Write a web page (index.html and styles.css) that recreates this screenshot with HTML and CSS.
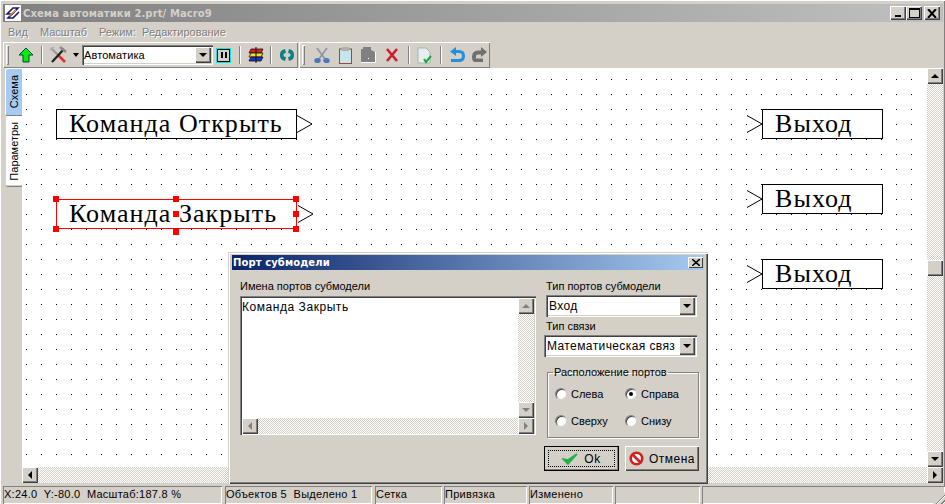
FILE: index.html
```html
<!DOCTYPE html>
<html lang="ru">
<head>
  <meta charset="UTF-8" />
  <title>Схема автоматики</title>
  <link rel="stylesheet" href="styles.css">
</head>
<body>
  <div class="window">
    <div class="titlebar">
      <svg class="logo" width="16" height="16" viewBox="0 0 16 16">
        <rect width="16" height="16" fill="#fff"/>
        <path d="M2 9 L8 3 H13 L7 9 Z" fill="none" stroke="#14147a" stroke-width="1.6"/>
        <path d="M14 7 L8 13 H3 L9 7" fill="none" stroke="#14147a" stroke-width="1.6"/>
        <path d="M4 11 L11 5" stroke="#e8902a" stroke-width="1.6"/>
      </svg>
      <span class="title-text">Схема автоматики 2.prt/ Macro9</span>
      <div class="caption-btns">
        <button class="caption-btn"><span class="cap-min"></span></button>
        <button class="caption-btn"><span class="cap-max"></span></button>
        <button class="caption-btn cap-close">
          <svg width="10" height="9" viewBox="0 0 10 9"><path d="M1 0 L9 9 M9 0 L1 9" stroke="#000" stroke-width="2"/></svg>
        </button>
      </div>
    </div>

    <div class="menu">
      <span>Вид</span>
      <span>Масштаб</span>
      <span>Режим:&nbsp;&nbsp;Редактирование</span>
    </div>

    <div class="toolbars">
      <div class="toolbar bar-one">
        <i class="grip"></i>
        <svg class="ico ico-up" width="16" height="16" viewBox="0 0 16 16"><path d="M8 1 L15 8 H11 V15 H5 V8 H1 Z" fill="#00f000" stroke="#044" stroke-width="1"/></svg>
        <i class="sep"></i>
        <svg class="ico ico-tools" width="18" height="18" viewBox="0 0 18 18">
          <path d="M2 2 L9 9" stroke="#9a9a9a" stroke-width="2.2"/>
          <path d="M9 9 L16 16" stroke="#e03030" stroke-width="2.6"/>
          <path d="M15 3 L3 16" stroke="#222" stroke-width="2.2"/>
          <path d="M11 1 L17 6" stroke="#8a8a8a" stroke-width="2.6"/>
          <path d="M1 4 L5 1" stroke="#b0b0b0" stroke-width="1.6"/>
        </svg>
        <i class="drop-caret"></i>
        <div class="combo tool-combo">
          <span class="combo-val">Автоматика</span>
          <span class="sb-btn"><i class="tri tri-down"></i></span>
        </div>
        <span class="pause-btn"><i></i><i></i></span>
        <i class="sep sep-a"></i>
        <svg class="ico ico-stack" width="16" height="16" viewBox="0 0 16 16">
          <path d="M3 2 H15 L13 6 H1 Z" fill="#e02020" stroke="#111" stroke-width=".8"/>
          <path d="M3 6 H15 L13 10 H1 Z" fill="#f0e020" stroke="#111" stroke-width=".8"/>
          <path d="M3 10 H15 L13 14 H1 Z" fill="#2030d0" stroke="#111" stroke-width=".8"/>
          <path d="M8 0 V16" stroke="#111"/>
        </svg>
        <i class="sep sep-b"></i>
        <svg class="ico ico-cycle" width="16" height="14" viewBox="0 0 16 14">
          <path d="M6 1 C2 2 1 4 1 7 C1 10 2 12 6 13 L7 9 C5 9 4.500 8 4.500 7 C4.500 6 5 5 7 5 Z" fill="#0f7f86"/>
          <path d="M10 1 C14 2 15 4 15 7 C15 10 14 12 10 13 L9 9 C11 9 11.500 8 11.500 7 C11.500 6 11 5 9 5 Z" fill="#0f7f86"/>
        </svg>
      </div>
      <div class="toolbar bar-two">
        <i class="grip"></i>
        <svg class="ico ico-cut" width="16" height="17" viewBox="0 0 16 17">
          <path d="M3 1 L11 12 M13 1 L5 12" stroke="#8a94a4" stroke-width="1.6"/>
          <ellipse cx="3.500" cy="13.500" rx="3.200" ry="2.600" fill="#4a78bc"/>
          <ellipse cx="12.500" cy="13.500" rx="3.200" ry="2.600" fill="#4a78bc"/>
        </svg>
        <svg class="ico ico-clip" width="13" height="17" viewBox="0 0 13 17">
          <rect x=".5" y="2" width="12" height="14.5" fill="#c8e4ec" stroke="#9a4a30"/>
          <rect x="3" y="0" width="7" height="4" fill="#b0b0b0"/>
        </svg>
        <svg class="ico ico-paste" width="16" height="16" viewBox="0 0 16 16">
          <path d="M1 15 V2 H3 V0 H11 V3 L15 5 V15 Z" fill="#808080"/>
          <path d="M1 15.500 H15.500 V5" fill="none" stroke="#fff"/>
          <rect x="8" y="11" width="1" height="1" fill="#fff"/>
        </svg>
        <svg class="ico ico-del" width="14" height="14" viewBox="0 0 14 14"><path d="M2 1 L12 13 M12 1 L2 13" stroke="#c8202c" stroke-width="2.6"/></svg>
        <i class="sep sep-c"></i>
        <svg class="ico ico-doc" width="15" height="17" viewBox="0 0 15 17">
          <path d="M1 1 H9 L13 5 V16 H1 Z" fill="#e6eeee" stroke="#a8b4b4"/>
          <path d="M7 12 L9 15 L14 9" fill="none" stroke="#1aa83c" stroke-width="2"/>
        </svg>
        <i class="sep sep-d"></i>
        <svg class="ico ico-undo" width="16" height="16" viewBox="0 0 16 16">
          <path d="M7 0 V9 L1 4.500 Z" fill="#2090e0"/>
          <path d="M5 4.500 H10 Q14.500 4.500 14.500 9 T10 13.500 H2" fill="none" stroke="#2090e0" stroke-width="3"/>
        </svg>
        <svg class="ico ico-redo" width="17" height="16" viewBox="0 0 17 16">
          <path d="M10 0 L16 5 L10 10 V7.500 H7 Q5 7.500 5 9.500 V11.500 H12 V15 H4 Q1 15 1 10 Q1 3.500 7 3.500 H10 Z" fill="#707070"/>
        </svg>
      </div>
    </div>

    <div class="main">
      <div class="side-tabs">
        <div class="side-tab tab-active"><span>Схема</span></div>
        <div class="side-tab tab-params"><span>Параметры</span></div>
      </div>
      <div class="work">
        <div class="work-row">
          <div class="canvas">
            <svg class="dots" width="905" height="399">
              <defs>
                <pattern id="grid" x="4" y="11" width="15" height="15" patternUnits="userSpaceOnUse">
                  <rect width="1" height="1" fill="#000"/>
                </pattern>
              </defs>
              <rect width="896" height="390" fill="url(#grid)"/>
            </svg>

            <div class="block b-open">Команда Открыть</div>
            <svg class="port p-open" width="16" height="18" viewBox="0 0 16 18"><path d="M0 .5 L15 9 L0 17.5" fill="#fff" stroke="#000"/></svg>

            <div class="block b-close">Команда Закрыть</div>
            <svg class="port p-close" width="16" height="18" viewBox="0 0 16 18"><path d="M0 .5 L15 9 L0 17.5" fill="#fff" stroke="#000"/></svg>
            <i class="h h1"></i><i class="h h2"></i><i class="h h3"></i>
            <i class="h h4"></i><i class="h h5"></i>
            <i class="h h6"></i><i class="h h7"></i><i class="h h8"></i>

            <div class="block b-out o1">Выход</div>
            <div class="block b-out o2">Выход</div>
            <div class="block b-out o3">Выход</div>
            <svg class="port q1" width="16" height="18" viewBox="0 0 16 18"><path d="M0 .5 L15 9 L0 17.5" fill="#fff" stroke="#000"/></svg>
            <svg class="port q2" width="16" height="18" viewBox="0 0 16 18"><path d="M0 .5 L15 9 L0 17.5" fill="#fff" stroke="#000"/></svg>
            <svg class="port q3" width="16" height="18" viewBox="0 0 16 18"><path d="M0 .5 L15 9 L0 17.5" fill="#fff" stroke="#000"/></svg>
          </div>
          <div class="vscroll track">
            <span class="sb-btn"><i class="tri tri-up"></i></span>
            <span class="v-thumb"></span>
            <span class="sb-btn"><i class="tri tri-down"></i></span>
          </div>
        </div>
        <div class="hscroll track">
          <span class="sb-btn"><i class="tri tri-left"></i></span>
          <span class="sb-btn"><i class="tri tri-right"></i></span>
        </div>
      </div>
    </div>

    <div class="status">
      <div class="cell c1">X:24.0&nbsp; Y:-80.0&nbsp; Масштаб:187.8 %</div>
      <div class="cell c2">Объектов 5&nbsp; Выделено 1</div>
      <div class="cell c3">Сетка</div>
      <div class="cell c4">Привязка</div>
      <div class="cell c5">Изменено</div>
      <div class="cell c6"></div>
      <div class="cell c8"><i class="size-grip"></i></div>
    </div>
  </div>

  <div class="dialog">
    <div class="dlg-title">
      <span>Порт субмодели</span>
      <button class="dlg-close"><svg width="8" height="7" viewBox="0 0 8 7"><path d="M0 0 L8 7 M8 0 L0 7" stroke="#000" stroke-width="1.6"/></svg></button>
    </div>
    <div class="dlg-body">
      <div class="dlg-left">
        <div class="lbl">Имена портов субмодели</div>
        <div class="listbox">
          <div class="list-row">
            <div class="list-text">Команда Закрыть</div>
            <div class="list-v track">
              <span class="sb-btn off"><i class="tri tri-up"></i></span>
              <span class="sb-btn off"><i class="tri tri-down"></i></span>
            </div>
          </div>
          <div class="list-h track">
            <span class="sb-btn off"><i class="tri tri-left"></i></span>
            <span class="sb-btn off"><i class="tri tri-right"></i></span>
          </div>
        </div>
      </div>
      <div class="dlg-right">
        <div class="lbl">Тип портов субмодели</div>
        <div class="combo combo-type">
          <span class="combo-val">Вход</span>
          <span class="sb-btn"><i class="tri tri-down"></i></span>
        </div>
        <div class="lbl lbl-link">Тип связи</div>
        <div class="combo combo-link">
          <span class="combo-val">Математическая связ</span>
          <span class="sb-btn"><i class="tri tri-down"></i></span>
        </div>
        <fieldset class="group">
          <legend>Расположение портов</legend>
          <div class="radios">
            <label class="radio"><i></i>Слева</label>
            <label class="radio on"><i></i>Справа</label>
            <label class="radio"><i></i>Сверху</label>
            <label class="radio"><i></i>Снизу</label>
          </div>
        </fieldset>
      </div>
    </div>
    <div class="dlg-buttons">
      <button class="btn btn-ok">
        <span class="focus">
          <svg width="16" height="13" viewBox="0 0 16 13"><path d="M1 7 L6 12 L15 2 L6 8 Z" fill="#22b04c" stroke="#22b04c" stroke-width="1.6"/></svg>
          Ok
        </span>
      </button>
      <button class="btn btn-cancel">
        <svg width="15" height="15" viewBox="0 0 15 15"><circle cx="7.500" cy="7.500" r="5.800" fill="#fff" stroke="#d02020" stroke-width="2.600"/><path d="M3.500 3.500 L11.500 11.500" stroke="#d02020" stroke-width="2.600"/></svg>
        Отмена
      </button>
    </div>
  </div>
</body>
</html>
```

FILE: styles.css
```css
html, body {
  margin: 0;
  height: 504px;
  overflow: hidden;
}
body {
  position: relative;
  width: 945px;
  background: #d4d0c8;
  font-family: "Liberation Sans", sans-serif;
  font-size: 11px;
  color: #000;
}
button {
  font: inherit;
  padding: 0;
  color: inherit;
}
i {
  display: block;
}

.window {
  display: flex;
  flex-direction: column;
  height: 504px;
  padding: 1px 2px 0 3px;
  box-sizing: border-box;
  box-shadow: inset 1px 1px 0 #fff, inset -1px 0 0 #808080, inset -2px 0 0 #d4d0c8;
}

/* title */
.titlebar {
  height: 18px;
  margin-top: 3px;
  display: flex;
  align-items: center;
  background: linear-gradient(to right, #808080, #c0c0c0);
  flex: none;
}
.logo {
  margin: 0 2px 0 2px;
  flex: none;
}
.title-text {
  font-weight: bold;
  color: #d4d0c8;
  font-family: "DejaVu Sans", sans-serif;
  font-size: 10px;
  letter-spacing: .1px;
  white-space: nowrap;
}
.caption-btns {
  margin-left: auto;
  display: flex;
  margin-right: 3px;
}
.caption-btn {
  width: 16px;
  height: 14px;
  background: #d4d0c8;
  border: none;
  box-shadow: inset 1px 1px 0 #fff, inset -1px -1px 0 #404040, inset -2px -2px 0 #808080;
  display: flex;
  align-items: center;
  justify-content: center;
  position: relative;
}
.cap-close {
  margin-left: 2px;
}
.cap-min {
  width: 6px;
  height: 2px;
  background: #000;
  margin-top: 6px;
}
.cap-max {
  width: 9px;
  height: 7px;
  border: 1px solid #000;
  border-top-width: 2px;
}

/* menu */
.menu {
  height: 20px;
  display: flex;
  align-items: center;
  gap: 12px;
  padding-left: 5px;
  flex: none;
  color: #808080;
  text-shadow: 1px 1px 0 #fff;
  font-size: 11px;
}

/* toolbars */
.toolbars {
  height: 26px;
  display: flex;
  flex: none;
  gap: 1px;
}
.toolbar {
  display: flex;
  align-items: center;
  box-sizing: border-box;
  height: 26px;
  box-shadow: inset 1px 1px 0 #fff, inset -1px -1px 0 #808080;
}
.bar-one {
  width: 295px;
}
.bar-two {
  width: 191px;
}
.grip {
  width: 3px;
  height: 20px;
  margin-left: 3px;
  box-shadow: inset 1px 1px 0 #fff, inset -1px -1px 0 #808080;
  flex: none;
}
.sep {
  width: 2px;
  height: 18px;
  box-shadow: inset 1px 0 0 #808080, inset -1px 0 0 #fff;
  flex: none;
}
.ico {
  flex: none;
}
.ico-up { margin-left: 9px; margin-right: 7px; }
.ico-tools { margin-left: 6px; }
.drop-caret {
  width: 0;
  height: 0;
  border: 3.5px solid transparent;
  border-top: 4px solid #000;
  border-bottom: 0;
  margin-left: 6px;
}
.tool-combo {
  width: 131px;
  height: 20px;
  margin-left: 3px;
}
.pause-btn {
  width: 15px;
  height: 15px;
  box-sizing: border-box;
  margin-left: 3px;
  border: 1px solid #00e8e8;
  background: #d4d0c8;
  outline: 1px solid #000;
  outline-offset: -2px;
  display: flex;
  align-items: center;
  justify-content: center;
  gap: 2px;
}
.pause-btn i {
  width: 2px;
  height: 6px;
  background: #000;
}
.sep-a { margin-left: 8px; }
.ico-stack { margin-left: 7px; }
.sep-b { margin-left: 6px; }
.ico-cycle { margin-left: 7px; }

.ico-cut { margin-left: 9px; }
.ico-clip { margin-left: 9px; }
.ico-paste { margin-left: 8px; }
.ico-del { margin-left: 9px; }
.sep-c { margin-left: 9px; }
.ico-doc { margin-left: 7px; }
.sep-d { margin-left: 8px; }
.ico-undo { margin-left: 7px; }
.ico-redo { margin-left: 6px; }

/* main area */
.main {
  flex: 1;
  display: flex;
  min-height: 0;
}
.side-tabs {
  width: 19px;
  flex: none;
  display: flex;
  flex-direction: column;
}
.side-tab {
  margin-left: 2px;
  width: 17px;
  box-sizing: border-box;
  display: flex;
  align-items: center;
  justify-content: center;
  border-radius: 2px 0 0 2px;
  box-shadow: inset 1px 1px 0 #fff, inset 0 -1px 0 #808080;
}
.side-tab span {
  writing-mode: vertical-rl;
  transform: rotate(180deg);
  font-size: 11px;
  white-space: nowrap;
}
.tab-active {
  height: 48px;
  background: #a6caf0;
}
.tab-params {
  height: 71px;
  background: #fff;
  box-shadow: inset 1px 0 0 #d4d0c8, inset 0 -1px 0 #808080, inset 0 -2px 0 #d4d0c8;
}

.work {
  width: 921px;
  display: flex;
  flex-direction: column;
}
.work-row {
  display: flex;
  height: 399px;
}
.canvas {
  position: relative;
  width: 905px;
  height: 399px;
  background: #fff;
  overflow: hidden;
}
.dots {
  position: absolute;
  left: 0;
  top: 0;
  shape-rendering: crispEdges;
}

/* diagram nodes */
.block {
  position: absolute;
  box-sizing: border-box;
  height: 30px;
  border: 1px solid #000;
  background: #fff;
  font-family: "Liberation Serif", serif;
  font-size: 26px;
  line-height: 28px;
  letter-spacing: 1.050px;
  padding-left: 12px;
  white-space: nowrap;
}
.b-open { left: 34px; top: 41px; width: 241px; }
.b-close { left: 34px; top: 131px; width: 241px; border-color: #f00; }
.b-out { left: 740px; width: 121px; }
.o1 { top: 41px; }
.o2 { top: 116px; }
.o3 { top: 191px; }
.port { position: absolute; }
.p-open { left: 275px; top: 47px; }
.p-close { left: 276px; top: 137px; }
.q1 { left: 725px; top: 47px; }
.q2 { left: 725px; top: 122px; }
.q3 { left: 725px; top: 197px; }
.h {
  position: absolute;
  width: 6px;
  height: 6px;
  background: #f00;
}
.h1 { left: 31px; top: 128px; }
.h2 { left: 151px; top: 128px; }
.h3 { left: 271px; top: 128px; }
.h4 { left: 151px; top: 143px; }
.h5 { left: 271px; top: 143px; }
.h6 { left: 31px; top: 158px; }
.h7 { left: 151px; top: 161px; }
.h8 { left: 271px; top: 158px; }

/* scrollbars */
.track {
  background: repeating-conic-gradient(#fff 0 25%, #d4d0c8 0 50%) 0 0 / 2px 2px;
  display: flex;
  justify-content: space-between;
  flex: none;
}
.sb-btn {
  width: 16px;
  height: 16px;
  flex: none;
  box-sizing: border-box;
  background: #d4d0c8;
  box-shadow: inset 1px 1px 0 #fff, inset -1px -1px 0 #404040, inset -2px -2px 0 #808080;
  display: flex;
  align-items: center;
  justify-content: center;
}
.tri {
  width: 0;
  height: 0;
  border: 4px solid transparent;
}
.tri-up { border-top: 0; border-bottom-color: #000; }
.tri-down { border-bottom: 0; border-top-color: #000; }
.tri-left { border-left: 0; border-right-color: #000; }
.tri-right { border-right: 0; border-left-color: #000; }
.off .tri-up { border-bottom-color: #808080; }
.off .tri-down { border-top-color: #808080; }
.off .tri-left { border-right-color: #808080; }
.off .tri-right { border-left-color: #808080; }

.vscroll {
  width: 16px;
  height: 399px;
  flex-direction: column;
}
.v-thumb {
  width: 16px;
  height: 16px;
  background: #d4d0c8;
  box-shadow: inset 1px 1px 0 #fff, inset -1px -1px 0 #404040, inset -2px -2px 0 #808080;
}
.hscroll {
  width: 921px;
  height: 16px;
}

/* status bar */
.status {
  height: 20px;
  flex: none;
  display: flex;
  margin: 0 -2px 0 0;
  padding-top: 2px;
  box-sizing: border-box;
}
.cell {
  box-sizing: border-box;
  height: 18px;
  line-height: 17px;
  padding-left: 1px;
  white-space: nowrap;
  overflow: hidden;
  box-shadow: inset 1px 1px 0 #808080, inset -1px -1px 0 #fff;
  font-size: 11px;
  letter-spacing: .25px;
  flex: none;
  position: relative;
}
.c1 { width: 219px; margin-right: 3px; }
.c2 { width: 147px; margin-right: 3px; }
.c3 { width: 67px; margin-right: 2px; }
.c4 { width: 83px; margin-right: 2px; }
.c5 { width: 84px; margin-right: 2px; }
.c6 { width: 85px; margin-right: 2px; }
.c8 { flex: 1; }
.size-grip {
  position: absolute;
  right: 0;
  bottom: 0;
  width: 12px;
  height: 12px;
  background: repeating-linear-gradient(135deg, #d4d0c8 0 2px, #808080 2px 3px, #fff 3px 4px);
  clip-path: polygon(100% 0, 100% 100%, 0 100%);
}

/* dialog */
.dialog {
  position: absolute;
  left: 228px;
  top: 252px;
  width: 480px;
  height: 232px;
  box-sizing: border-box;
  background: #d4d0c8;
  padding: 3px 4px;
  box-shadow: inset 1px 1px 0 #d4d0c8, inset 2px 2px 0 #fff, inset -1px -1px 0 #404040, inset -2px -2px 0 #808080;
  display: flex;
  flex-direction: column;
}
.dlg-title {
  height: 15px;
  flex: none;
  background: linear-gradient(to right, #0a246a, #a6caf0);
  color: #fff;
  font-weight: bold;
  display: flex;
  align-items: center;
  justify-content: space-between;
  padding: 0 0 0 1px;
  font-family: "DejaVu Sans", sans-serif;
  font-size: 10px;
  letter-spacing: .1px;
}
.dlg-close {
  width: 15px;
  height: 11px;
  background: #d4d0c8;
  border: none;
  box-shadow: inset 1px 1px 0 #fff, inset -1px -1px 0 #404040;
  display: flex;
  align-items: center;
  justify-content: center;
  margin-right: 1px;
}
.dlg-body {
  display: flex;
  flex: none;
  gap: 9px;
  padding-left: 8px;
}
.dlg-left {
  width: 296px;
}
.lbl {
  height: 14px;
  line-height: 14px;
  white-space: nowrap;
  font-size: 11px;
}
.dlg-left .lbl {
  margin-top: 9px;
  margin-bottom: 3px;
}
.listbox {
  height: 139px;
  box-sizing: border-box;
  box-shadow: inset 1px 1px 0 #808080, inset 2px 2px 0 #404040, inset -1px -1px 0 #fff;
  padding: 2px 2px 1px 2px;
  display: flex;
  flex-direction: column;
}
.list-row {
  flex: 1;
  display: flex;
  min-height: 0;
  background: #fff;
}
.list-text {
  flex: 1;
  padding: 2px 0 0 0;
  line-height: 14px;
  font-size: 12px;
  letter-spacing: .55px;
}
.list-v {
  width: 16px;
  flex-direction: column;
}
.list-h {
  height: 16px;
}
.dlg-right {
  width: 155px;
  padding-top: 9px;
}
.dlg-right > .lbl {
  padding-left: 1px;
}
.combo {
  display: flex;
  align-items: center;
  justify-content: space-between;
  box-sizing: border-box;
  background: #fff;
  padding: 2px;
  box-shadow: inset 1px 1px 0 #808080, inset 2px 2px 0 #404040, inset -1px -1px 0 #fff, inset -2px -2px 0 #d4d0c8;
}
.combo-val {
  padding-left: 1px;
  white-space: nowrap;
  flex: 1;
  font-size: 12px;
  letter-spacing: .4px;
}
.tool-combo .combo-val {
  font-size: 11px;
  padding-left: 0;
  letter-spacing: .1px;
}
.combo .sb-btn {
  height: 100%;
}
.combo-type {
  height: 22px;
  width: 151px;
  margin: 2px 0 0 1px;
}
.lbl-link {
  margin-top: 2px;
  margin-bottom: 2px;
}
.combo-link {
  height: 22px;
  width: 153px;
  margin-left: -1px;
}
.group {
  margin: 10px 0 0 2px;
  padding: 0;
  width: 152px;
  height: 71px;
  box-sizing: border-box;
  border: 1px solid #808080;
  box-shadow: 1px 1px 0 #fff, inset 1px 1px 0 #fff;
  min-inline-size: 0;
}
.group legend {
  padding: 0 1px;
  margin-left: 5px;
  line-height: 10px;
}
.radios {
  display: grid;
  grid-template-columns: 70px 70px;
  grid-auto-rows: 27px;
  padding: 3px 0 0 7px;
  align-items: center;
}
.radio {
  display: flex;
  align-items: center;
  gap: 4px;
}
.radio i {
  width: 12px;
  height: 12px;
  box-sizing: border-box;
  border-radius: 50%;
  background: #fff;
  border: 1px solid;
  border-color: #808080 #d4d0c8 #d4d0c8 #808080;
  box-shadow: inset 1px 1px 0 #404040;
  position: relative;
}
.radio.on i::after {
  content: "";
  position: absolute;
  left: 3px;
  top: 3px;
  width: 4px;
  height: 4px;
  border-radius: 50%;
  background: #000;
}
.dlg-buttons {
  display: flex;
  justify-content: flex-end;
  gap: 6px;
  margin-top: 8px;
  padding-right: 5px;
}
.btn {
  height: 25px;
  width: 74px;
  background: #d4d0c8;
  border: none;
  box-shadow: inset 1px 1px 0 #fff, inset -1px -1px 0 #404040, inset -2px -2px 0 #808080;
  display: flex;
  align-items: center;
  justify-content: center;
  gap: 5px;
  font-size: 12px;
  letter-spacing: .5px;
}
.btn-ok {
  width: 75px;
  outline: 1px solid #000;
  outline-offset: -1px;
}
.focus {
  width: 67px;
  height: 17px;
  box-sizing: border-box;
  border: 1px dotted #000;
  display: flex;
  align-items: center;
  justify-content: center;
  gap: 6px;
}
```
